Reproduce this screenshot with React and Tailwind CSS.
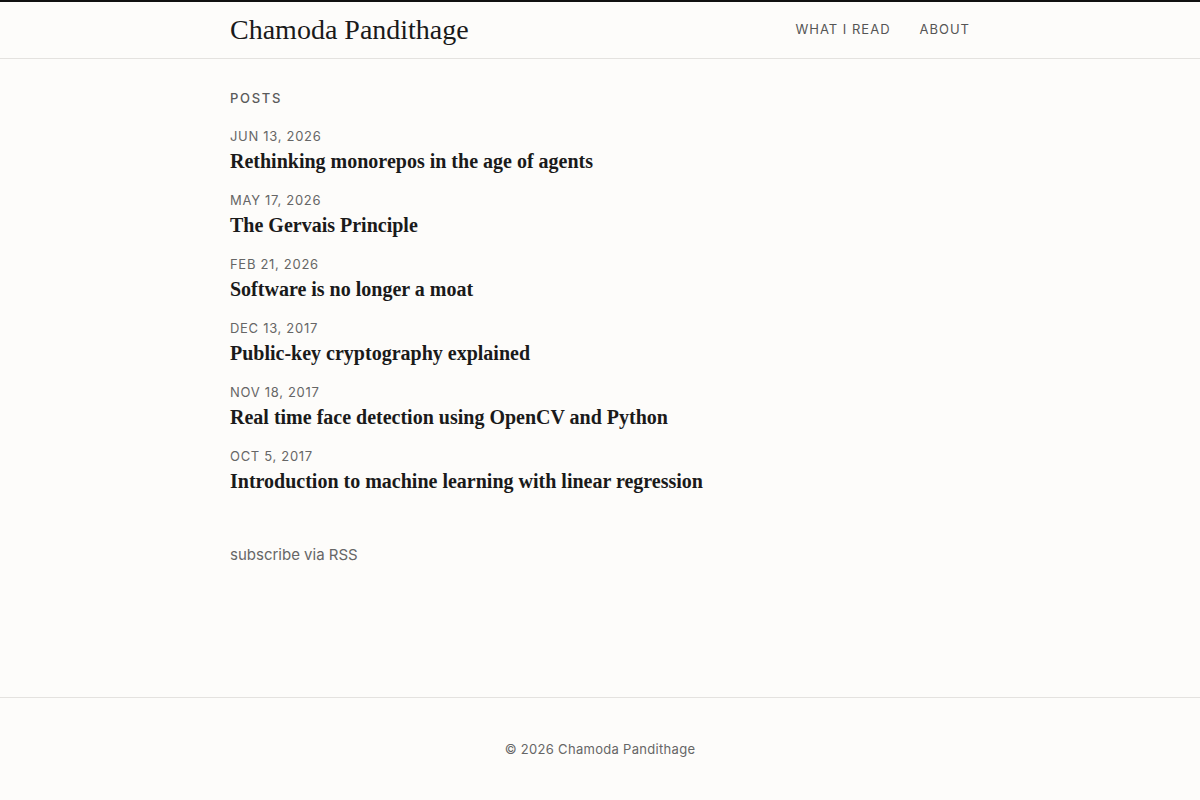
const posts = [
  { date: "Jun 13, 2026", title: "Rethinking monorepos in the age of agents" },
  { date: "May 17, 2026", title: "The Gervais Principle" },
  { date: "Feb 21, 2026", title: "Software is no longer a moat" },
  { date: "Dec 13, 2017", title: "Public-key cryptography explained" },
  { date: "Nov 18, 2017", title: "Real time face detection using OpenCV and Python" },
  { date: "Oct 5, 2017", title: "Introduction to machine learning with linear regression" },
];

const serif = { fontFamily: '"Liberation Serif", "DejaVu Serif", serif' };

export default function App() {
  return (
    <div
      className="min-h-screen flex flex-col bg-[#fdfcfa] text-[#1a1a1a] border-t-2 border-[#111]"
      style={{ fontFamily: 'Inter, "Noto Sans", sans-serif' }}
    >
      <header className="border-b border-[#e4e2df]">
        <div className="max-w-[740px] mx-auto h-[56px] flex items-center justify-between">
          <a href="#" className="text-[28px] text-[#1a1a1a]" style={serif}>
            Chamoda Pandithage
          </a>
          <nav className="flex gap-[29px] text-[13px] tracking-[1px] text-[#555]">
            <a href="#">WHAT I READ</a>
            <a href="#">ABOUT</a>
          </nav>
        </div>
      </header>

      <main className="flex-1">
        <div className="max-w-[740px] mx-auto pt-[30px]">
          <h2 className="text-[13px] font-medium tracking-[1.7px] text-[#5a5a5a] uppercase">Posts</h2>
          <ul className="mt-[17px] flex flex-col gap-[14px]">
            {posts.map((p) => (
              <li key={p.title} className="flex flex-col">
                <span className="text-[13px] tracking-[0.7px] text-[#666] uppercase leading-[20px]">{p.date}</span>
                <a href="#" className="text-[20px] font-bold leading-[30px] text-[#1a1a1a]" style={serif}>
                  {p.title}
                </a>
              </li>
            ))}
          </ul>
          <p className="mt-[48px] text-[15px] text-[#666]">
            <a href="#">subscribe via RSS</a>
          </p>
        </div>
      </main>

      <footer className="border-t border-[#e4e2df] h-[103px] flex items-center justify-center">
        <p className="text-[13px] text-[#666] tracking-[0.3px] pt-[2px]">© 2026 Chamoda Pandithage</p>
      </footer>
    </div>
  );
}
